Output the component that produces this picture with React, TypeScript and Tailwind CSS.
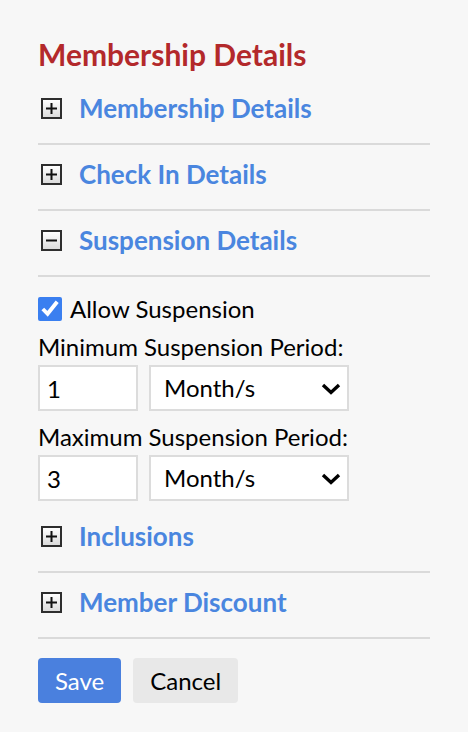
import React, { useState } from "react";

function ToggleIcon({ open }: { open: boolean }) {
  return (
    <span className="flex h-[21px] w-[21px] items-center justify-center border-2 border-[#2e2e2e] bg-gradient-to-b from-[#ffffff] to-[#dcdcdc]">
      <svg width="11" height="11" viewBox="0 0 11 11">
        <rect x="0" y="4.5" width="11" height="2" fill="#111" />
        {!open && <rect x="4.5" y="0" width="2" height="11" fill="#111" />}
      </svg>
    </span>
  );
}

function SectionRow({
  title,
  open,
  onToggle,
}: {
  title: string;
  open: boolean;
  onToggle: () => void;
}) {
  return (
    <div className="border-b-2 border-[#dadada]">
      <button
        type="button"
        onClick={onToggle}
        className="flex h-[64px] w-full items-center gap-[17px] pb-[6px] pl-[3px] text-left"
      >
        <ToggleIcon open={open} />
        <span className="text-[26px] font-bold leading-[32px] text-[#4a86df]">
          {title}
        </span>
      </button>
    </div>
  );
}

function PeriodRow({ value }: { value: string }) {
  return (
    <div className="mt-[4px] flex gap-[11px]">
      <input
        defaultValue={value}
        className="h-[46px] w-[100px] border-2 border-[#dcdcdc] bg-white pl-[7px] text-[24px] text-black outline-none"
      />
      <div className="relative h-[46px] w-[200px]">
        <select
          defaultValue="Month/s"
          className="h-full w-full appearance-none border-2 border-[#dcdcdc] bg-white pl-[13px] text-[24px] text-black outline-none"
        >
          <option>Day/s</option>
          <option>Week/s</option>
          <option>Month/s</option>
          <option>Year/s</option>
        </select>
        <svg
          className="pointer-events-none absolute right-[8px] top-[18px]"
          width="20"
          height="12"
          viewBox="0 0 20 12"
        >
          <path d="M2 2 L10 9.5 L18 2" fill="none" stroke="#000" strokeWidth="3.4" />
        </svg>
      </div>
    </div>
  );
}

export default function App() {
  const [open, setOpen] = useState<Record<string, boolean>>({
    membership: false,
    checkin: false,
    suspension: true,
    inclusions: false,
    discount: false,
  });
  const toggle = (k: string) => setOpen((o) => ({ ...o, [k]: !o[k] }));

  return (
    <div
      className="min-h-[732px] w-[468px] bg-[#f7f7f7] px-[38px] pt-[36px]"
      style={{ fontFamily: "Lato, 'Noto Sans', sans-serif" }}
    >
      <h1 className="text-[30px] font-bold leading-[36px] text-[#b3292b]">
        Membership Details
      </h1>
      <div className="mt-[7px]">
        <SectionRow
          title="Membership Details"
          open={open.membership}
          onToggle={() => toggle("membership")}
        />
        <SectionRow
          title="Check In Details"
          open={open.checkin}
          onToggle={() => toggle("checkin")}
        />
        <SectionRow
          title="Suspension Details"
          open={open.suspension}
          onToggle={() => toggle("suspension")}
        />
        {open.suspension && (
          <div className="pb-[6px] pt-[18px] text-[24px] leading-[28px] text-black">
            <label className="flex items-center gap-[8px]">
              <input
                type="checkbox"
                defaultChecked
                className="h-[24px] w-[24px] accent-[#3a7ff0]"
              />
              <span>Allow Suspension</span>
            </label>
            <div className="mt-[10px]">Minimum Suspension Period:</div>
            <PeriodRow value="1" />
            <div className="mt-[12px]">Maximum Suspension Period:</div>
            <PeriodRow value="3" />
          </div>
        )}
        <SectionRow
          title="Inclusions"
          open={open.inclusions}
          onToggle={() => toggle("inclusions")}
        />
        <SectionRow
          title="Member Discount"
          open={open.discount}
          onToggle={() => toggle("discount")}
        />
      </div>
      <div className="mt-[19px] flex gap-[12px]">
        <button
          type="submit"
          className="h-[45px] rounded-[4px] bg-[#4a80de] px-[17px] text-[24px] text-white"
        >
          Save
        </button>
        <button
          type="button"
          className="h-[45px] rounded-[4px] bg-[#e8e8e8] px-[17px] text-[24px] text-black"
        >
          Cancel
        </button>
      </div>
    </div>
  );
}
